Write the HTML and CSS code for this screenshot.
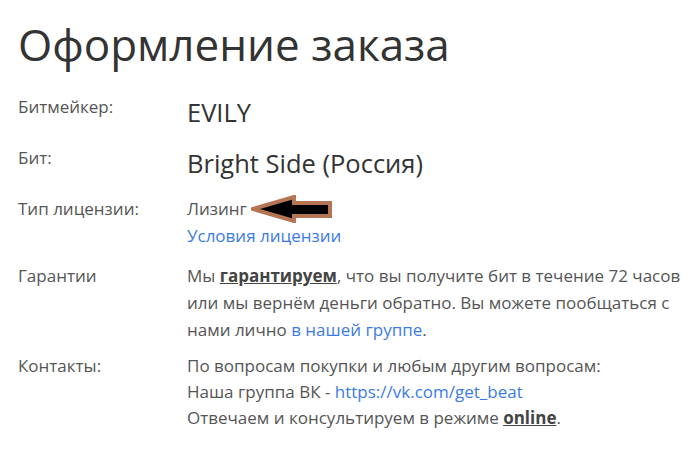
FILE: index.html
```html
<!DOCTYPE html>
<html lang="ru">
<head>
    <meta charset="UTF-8">
    <title>Оформление заказа</title>
    <link rel="stylesheet" href="styles.css">
</head>
<body>
    <div class="container">
        <h1>Оформление заказа</h1>

        <div class="order">
            <div class="row">
                <div class="label">Битмейкер:</div>
                <div class="value big">EVILY</div>
            </div>

            <div class="row">
                <div class="label">Бит:</div>
                <div class="value big">Bright Side (Россия)</div>
            </div>

            <div class="row">
                <div class="label">Тип лицензии:</div>
                <div class="value">
                    <div class="license">
                        Лизинг
                        <svg class="arrow" width="82" height="28" viewBox="0 0 82 28">
                            <polygon points="2,14 43,2 43,8 79,8 79,21 43,21 43,26" fill="#000" stroke="#b57454" stroke-width="4"/>
                        </svg>
                    </div>
                    <a href="#">Условия лицензии</a>
                </div>
            </div>

            <div class="row">
                <div class="label">Гарантии</div>
                <div class="value">
                    Мы <b><u>гарантируем</u></b>, что вы получите бит в течение 72 часов или мы вернём деньги обратно. Вы можете пообщаться с нами лично <a href="#">в нашей группе</a>.
                </div>
            </div>

            <div class="row contacts">
                <div class="label">Контакты:</div>
                <div class="value">
                    По вопросам покупки и любым другим вопросам:<br>
                    Наша группа ВК - <a href="#">https://vk.com/get_beat</a><br>
                    Отвечаем и консультируем в режиме <b><u>online</u></b>.
                </div>
            </div>
        </div>
    </div>
</body>
</html>
```

FILE: styles.css
```css
body {
    margin: 0;
    font-family: 'Open Sans', 'Noto Sans', sans-serif;
    color: #555;
    background: #fff;
}

.container {
    padding: 0 0 0 18px;
}

h1 {
    margin: 0;
    padding-top: 19px;
    font-size: 44px;
    font-weight: 400;
    line-height: 50px;
    color: #333;
}

.order {
    display: flex;
    flex-direction: column;
    gap: 13px;
    margin-top: 24px;
    font-size: 17px;
    line-height: 27px;
}

.row {
    display: grid;
    grid-template-columns: 169px 500px;
}

.value.big {
    font-size: 25.5px;
    line-height: 34px;
    color: #333;
    padding: 2px 0;
}

.contacts {
    margin-top: -3px;
    line-height: 26px;
}

.license {
    display: flex;
    align-items: center;
    gap: 4px;
    height: 27px;
}

.arrow {
    display: block;
    flex-shrink: 0;
}

a {
    color: #3b7be6;
    text-decoration: none;
}

b {
    color: #444;
}
```
